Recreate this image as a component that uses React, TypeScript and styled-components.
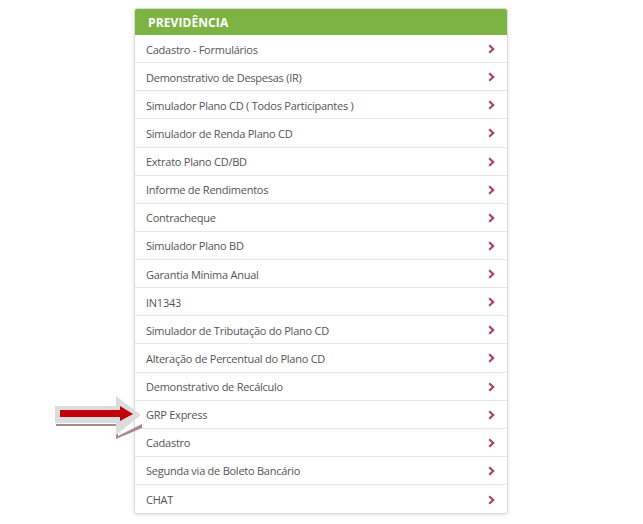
import React from 'react';
import styled, { createGlobalStyle } from 'styled-components';

const items = [
  'Cadastro - Formulários',
  'Demonstrativo de Despesas (IR)',
  'Simulador Plano CD ( Todos Participantes )',
  'Simulador de Renda Plano CD',
  'Extrato Plano CD/BD',
  'Informe de Rendimentos',
  'Contracheque',
  'Simulador Plano BD',
  'Garantia Mínima Anual',
  'IN1343',
  'Simulador de Tributação do Plano CD',
  'Alteração de Percentual do Plano CD',
  'Demonstrativo de Recálculo',
  'GRP Express',
  'Cadastro',
  'Segunda via de Boleto Bancário',
  'CHAT',
];

const GlobalStyle = createGlobalStyle`
  html, body {
    margin: 0;
    padding: 0;
    background: #fff;
  }
  body {
    font-family: 'Open Sans', 'Noto Sans', sans-serif;
  }
`;

const Page = styled.div`
  position: relative;
  width: 643px;
  height: 524px;
  padding: 8px 0 0 134px;
  box-sizing: border-box;
`;

const Panel = styled.div`
  width: 372px;
  border: 1px solid #dcdcdc;
  border-radius: 3px;
  box-shadow: 0 1px 4px rgba(0, 0, 0, 0.12);
  background: #fff;
  overflow: hidden;
`;

const Header = styled.div`
  height: 26px;
  background: #7cb342;
  color: #fff;
  font-weight: 700;
  font-size: 12px;
  letter-spacing: 0.1px;
  display: flex;
  align-items: center;
  padding-left: 13px;
`;

const List = styled.ul`
  list-style: none;
  margin: 0;
  padding: 0;
`;

const Row = styled.li<{ $last?: boolean }>`
  height: 28.125px;
  box-sizing: border-box;
  display: flex;
  align-items: center;
  justify-content: space-between;
  padding: 1px 12px 0 11px;
  border-bottom: ${(p) => (p.$last ? 'none' : '1px solid #e6e6e6')};
  font-size: 11px;
  letter-spacing: -0.25px;
  color: #555;
`;

const Chevron = styled.svg`
  width: 7px;
  height: 10px;
  flex: none;
`;

const Pointer = styled.svg`
  position: absolute;
  left: 40px;
  top: 390px;
  width: 110px;
  height: 50px;
`;

const App = () => {
  return (
    <>
      <GlobalStyle />
      <Page>
        <Panel>
          <Header>PREVIDÊNCIA</Header>
          <List>
            {items.map((item, i) => (
              <Row key={item + i} $last={i === items.length - 1}>
                <span>{item}</span>
                <Chevron viewBox="0 0 7 10">
                  <path d="M1.2 1.2 L5.2 5 L1.2 8.8" fill="none" stroke="#a3446e" strokeWidth="2.2" />
                </Chevron>
              </Row>
            ))}
          </List>
        </Panel>
        {/* seta indicando GRP Express */}
        <Pointer viewBox="40 390 110 50">
          <path d="M56 426 L116 426 L116 439 L142 428 L142 424 L118 436 L118 424 L56 424 Z" fill="#a88a8c" />
          <path d="M55 406 L116 406 L116 396 L141 415 L116 435 L116 423 L55 423 Z" fill="#dcdcdc" />
          <path d="M60 410 L120 410 L120 406 L133 414 L120 421 L120 417 L60 417 Z" fill="#c0000b" />
        </Pointer>
      </Page>
    </>
  );
};

export default App;
